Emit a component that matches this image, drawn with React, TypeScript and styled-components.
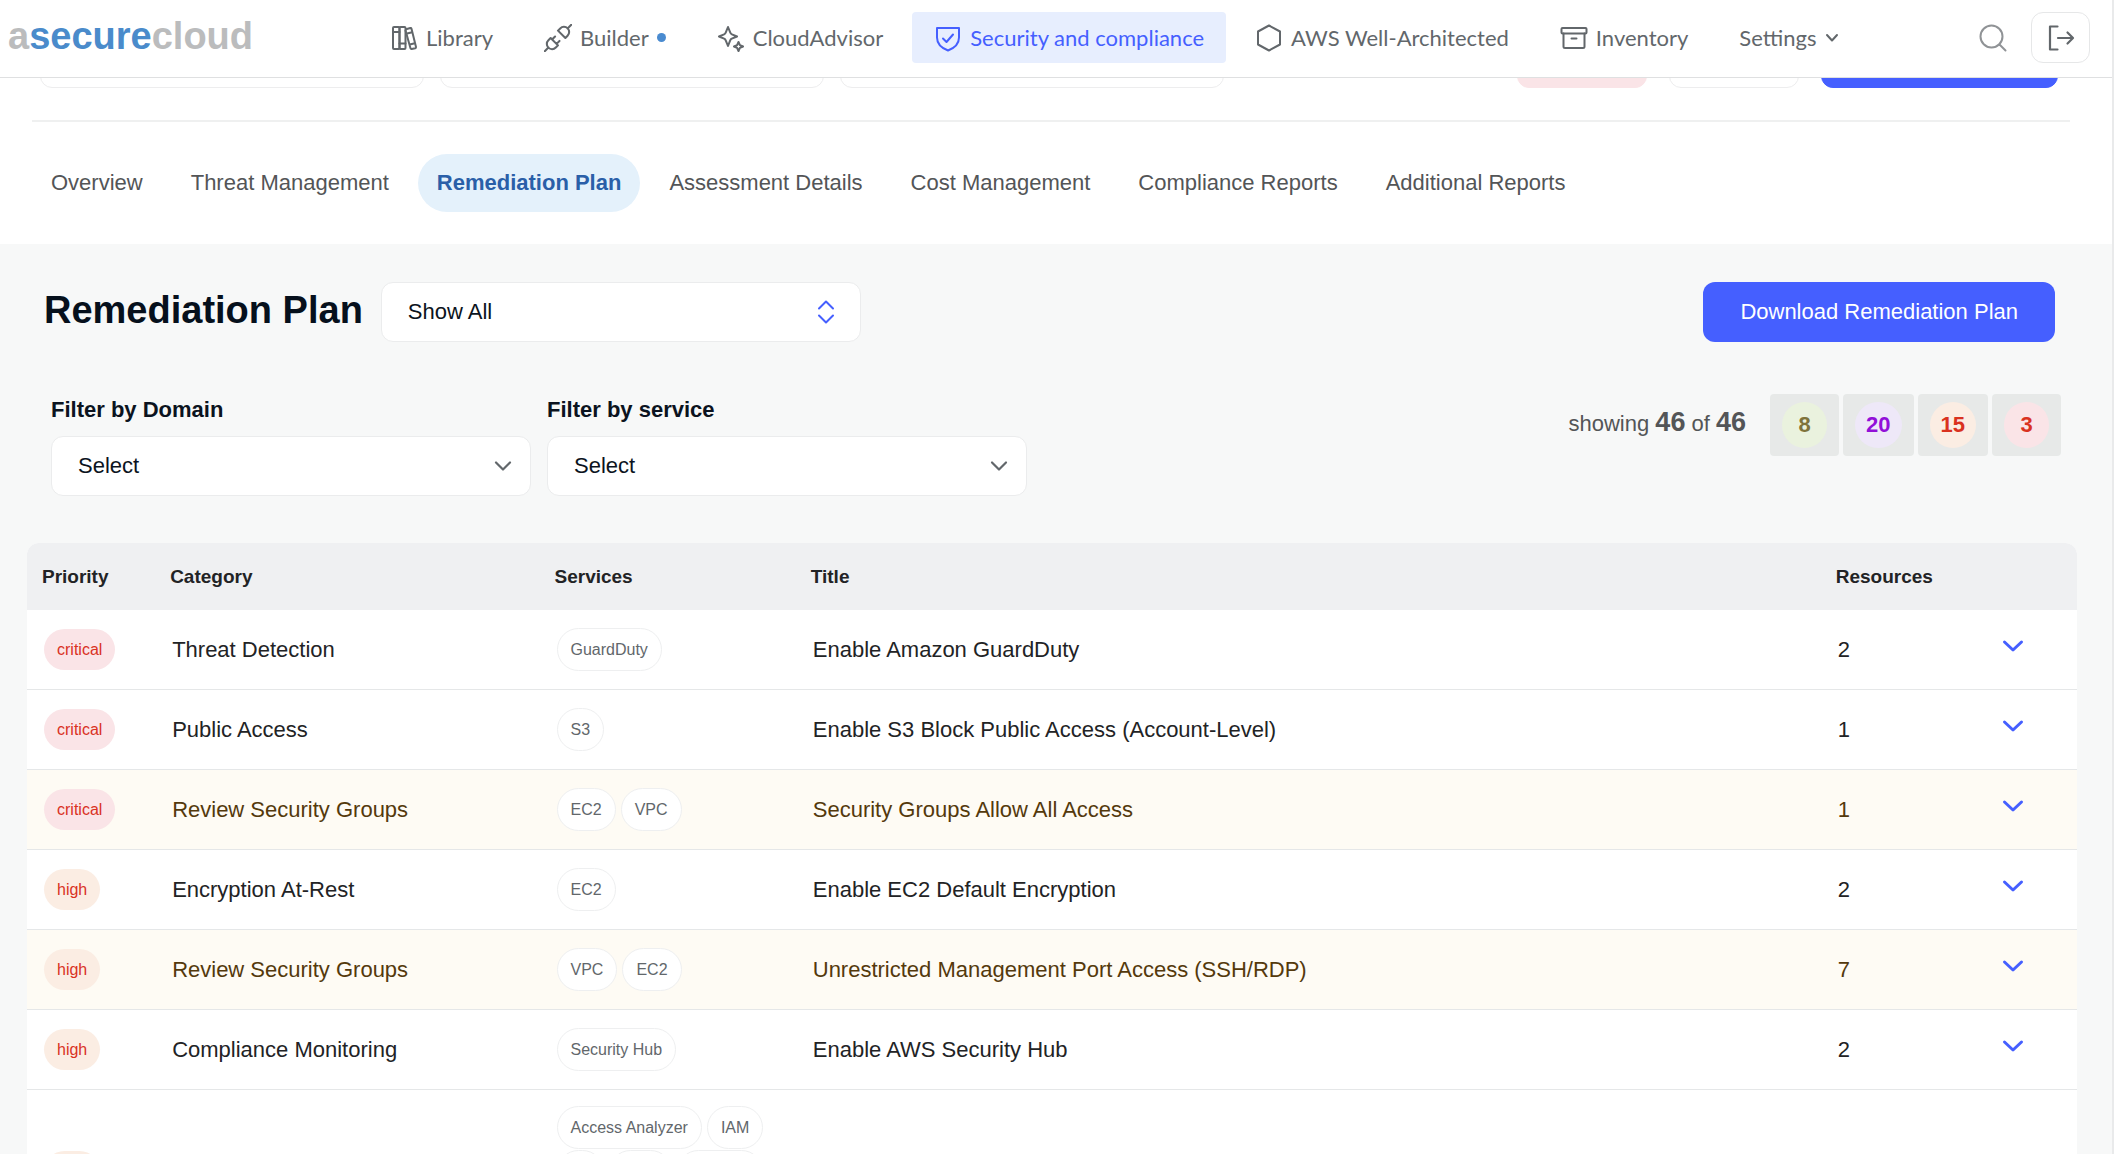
import React from 'react';
import styled, { createGlobalStyle, css } from 'styled-components';

const sans = `"Liberation Sans", Arial, Helvetica, sans-serif`;
const lato = `Lato, "Open Sans", sans-serif`;
const line = '#e5e7e8';
const blue = '#455fff';

const Global = createGlobalStyle`
  *, *::before, *::after { box-sizing: border-box; }
  html { height: 100%; overflow: hidden; }
  body { margin: 0; height: 100%; overflow: hidden; background: #f7f8f8; font-family: ${sans}; font-size: 22px; line-height: 28px; color: #222325; }
  #root { height: 100%; }
  button, select { font: inherit; color: inherit; margin: 0; }
  button { background: none; border: 0; padding: 0; cursor: pointer; }
  a { color: inherit; text-decoration: none; }
`;

const Page = styled.div`
  height: 100%;
  overflow: hidden;
  border-right: 2px solid #e9eaeb;
`;

const Header = styled.header`
  position: relative;
  z-index: 1;
  display: flex;
  align-items: flex-start;
  height: 78px;
  padding: 12px 22px 0 8px;
  background: #fff;
  border-bottom: 1px solid #dfe0e1;
`;

const Logo = styled.a`
  flex: 0 0 360px;
  font-size: 38px;
  line-height: 48px;
  font-weight: 700;
  color: #bbbcbd;
  b { color: #4a8bcb; }
`;

const Nav = styled.nav`
  display: flex;
  gap: 7px;
  font-family: ${lato};
`;

const NavLink = styled.a<{ $active?: boolean }>`
  display: flex;
  align-items: center;
  gap: 8px;
  height: 51px;
  padding: 0 22px;
  border-radius: 4px;
  white-space: nowrap;
  color: ${p => (p.$active ? blue : '#62676b')};
  background: ${p => (p.$active ? '#e7eefe' : 'transparent')};
  svg { flex: none; }
`;

const Dot = styled.span`
  width: 9px;
  height: 9px;
  border-radius: 50%;
  background: #4a8bd0;
`;

const Tools = styled.div`
  display: flex;
  align-items: center;
  gap: 24px;
  margin-left: auto;
  color: #909396;
`;

const ToolButton = styled.button<{ $boxed?: boolean }>`
  display: flex;
  align-items: center;
  justify-content: center;
  height: 51px;
  ${p => p.$boxed && css`
    width: 59px;
    border: 1px solid #e6e7e8;
    border-radius: 12px;
    color: #62676b;
  `}
`;

const Top = styled.section`
  padding: 0 42px 0 32px;
  height: 166px;
  background: #fff;
`;

const Strip = styled.div`
  display: flex;
  align-items: flex-end;
  height: 44px;
  padding: 0 12px 32px 8px;
  border-bottom: 2px solid #eff0f0;
`;

const CutBox = styled.div<{ $w: number; $gap: number; $bg?: string }>`
  width: ${p => p.$w}px;
  height: 60px;
  margin-right: ${p => p.$gap}px;
  border-radius: 12px;
  border: 1px solid ${p => p.$bg ?? '#ededee'};
  background: ${p => p.$bg ?? '#fff'};
`;

const Push = styled.div`
  flex: 1;
`;

const Tabs = styled.nav`
  display: flex;
  gap: 10px;
  padding-top: 32px;
`;

const Tab = styled.a<{ $active?: boolean }>`
  padding: 0 19px;
  border-radius: 29px;
  line-height: 58px;
  white-space: nowrap;
  color: ${p => (p.$active ? '#2a5fa8' : '#535557')};
  font-weight: ${p => (p.$active ? 700 : 400)};
  background: ${p => (p.$active ? '#e4f1fb' : 'transparent')};
`;

const Body = styled.main`
  padding: 38px 35px 0 27px;
`;

const TitleBar = styled.div`
  display: flex;
  align-items: center;
  padding: 0 22px 0 17px;
  gap: 18px;
`;

const Title = styled.h1`
  margin: 0;
  padding-bottom: 4px;
  font-size: 38px;
  line-height: 56px;
  color: #06101c;
  white-space: nowrap;
`;

const Picker = styled.div`
  display: grid;
  width: 480px;
  align-items: center;
  > * { grid-area: 1 / 1; }
  > svg { justify-self: end; pointer-events: none; }
`;

const Select = styled.select`
  appearance: none;
  width: 100%;
  height: 60px;
  padding: 0 26px;
  border: 1px solid #ebeced;
  border-radius: 12px;
  background: #fff;
  color: #0b1320;
`;

const Download = styled.button`
  margin-left: auto;
  height: 60px;
  padding: 0 37px;
  border-radius: 12px;
  background: ${blue};
  color: #fff;
  white-space: nowrap;
`;

const FilterBar = styled.div`
  display: flex;
  gap: 16px;
  padding: 52px 16px 0 24px;
`;

const Filter = styled.div`
  display: flex;
  flex-direction: column;
  gap: 12px;
  padding-top: 2px;
  label { font-weight: 700; color: #0b1320; }
`;

const Counts = styled.div`
  display: flex;
  align-items: flex-start;
  gap: 4px;
  margin-left: auto;
`;

const Showing = styled.p`
  margin: 0 20px 0 0;
  line-height: 56px;
  color: #535557;
  b { font-size: 27px; }
`;

const tones = {
  low: css`background: #eaf2de; color: #7f733b;`,
  medium: css`background: #eee8f8; color: #9210d8;`,
  high: css`background: #fbede3; color: #d9321f;`,
  critical: css`background: #fae4e7; color: #d9321f;`,
};
type Tone = keyof typeof tones;

const CountButton = styled.button`
  height: 62px;
  padding: 0 12px;
  border-radius: 4px;
  background: #e7e9e8;
`;

const CountPill = styled.span<{ $tone: Tone }>`
  display: block;
  min-width: 45px;
  padding: 0 11px;
  border-radius: 23px;
  line-height: 46px;
  font-weight: 700;
  ${p => tones[p.$tone]}
`;

const Table = styled.table`
  width: 100%;
  margin-top: 47px;
  border-collapse: separate;
  border-spacing: 0;
  table-layout: fixed;
  background: #fff;
  border-radius: 12px 12px 0 0;
  overflow: hidden;
`;

const Th = styled.th`
  height: 67px;
  padding: 0 15px;
  background: #eff0f2;
  text-align: left;
  font-size: 19px;
`;

const Row = styled.tr<{ $review?: boolean }>`
  background: ${p => (p.$review ? '#fefbf4' : '#fff')};
  color: ${p => (p.$review ? '#54390c' : '#222325')};
`;

const Td = styled.td`
  height: 80px;
  padding: 16px 17px;
  border-bottom: 1px solid ${line};
`;

const Priority = styled.span<{ $tone: Tone }>`
  display: inline-block;
  padding: 0 13px;
  border-radius: 21px;
  font-size: 16px;
  line-height: 41px;
  vertical-align: top;
  ${p => tones[p.$tone]}
`;

const Services = styled.div`
  display: flex;
  flex-wrap: wrap;
  gap: 1px 5px;
`;

const Service = styled.span`
  padding: 0 13px;
  border: 1px solid #eeeff0;
  border-radius: 22px;
  background: #fff;
  font-size: 16px;
  line-height: 41px;
  color: #62676b;
  white-space: nowrap;
`;

const Expand = styled.button`
  display: block;
  padding: 0 0 8px;
  color: ${blue};
  svg { display: block; }
`;

type IconProps = { size?: number; width?: number; box?: string; children: React.ReactNode };
const Icon = ({ size = 28, width = 2, box = '0 0 28 28', children }: IconProps) => (
  <svg width={size} height={size} viewBox={box} fill="none" stroke="currentColor"
    strokeWidth={width} strokeLinecap="round" strokeLinejoin="round" aria-hidden="true">
    {children}
  </svg>
);

const LibraryIcon = () => (
  <Icon>
    <rect x="3" y="3" width="6.500" height="22" rx="1" />
    <rect x="9.500" y="3" width="6" height="22" rx="1" />
    <path d="M3 8h6.500M9.500 19.500h6M16 5.200l4.300-1.200a1 1 0 0 1 1.200.7L26 23a1 1 0 0 1-.7 1.200l-3.600.8a1 1 0 0 1-1.200-.7L15.500 6.500M17 9.500l5.200-1.300M19.800 20.500l5-1.200" />
  </Icon>
);

const PlugIcon = () => (
  <Icon width={1.4} box="2.500 2.500 19 19">
    <path d="M7 12l5 5-1.500 1.500a3.536 3.536 0 1 1-5-5zM17 12l-5-5 1.500-1.500a3.536 3.536 0 1 1 5 5zM3 21l2.500-2.500M18.500 5.500L21 3M10 11l-2 2M13 14l-2 2" />
  </Icon>
);

const SparkIcon = () => (
  <Icon>
    <path d="M11 3l2.300 5.700a3 3 0 0 0 1.600 1.600L20 12.500l-5.200 2.200a3 3 0 0 0-1.600 1.600L11 22l-2.300-5.700a3 3 0 0 0-1.600-1.600L2 12.500l5.100-2.200a3 3 0 0 0 1.600-1.600zM21.500 18l1.400 3.100 3.100 1.400-3.100 1.400-1.400 3.100-1.400-3.100-3.100-1.400 3.100-1.400z" />
  </Icon>
);

const ShieldIcon = () => (
  <Icon>
    <path d="M3 4h22v9.500c0 6.500-4.500 10.500-11 13-6.500-2.500-11-6.500-11-13zM9 14.500l3.500 3.500 6.500-7.500" />
  </Icon>
);

const HexIcon = () => (
  <Icon>
    <path d="M14 1.500l11 6v13L14 26.500l-11-6v-13z" />
  </Icon>
);

const ArchiveIcon = () => (
  <Icon>
    <rect x="1.500" y="4" width="25" height="5.500" rx="1" />
    <path d="M3.500 9.500v13a1.500 1.500 0 0 0 1.500 1.500h18a1.500 1.500 0 0 0 1.500-1.500v-13M11.500 14.500h5" />
  </Icon>
);

const nav: { label: string; icon?: React.ReactNode; active?: boolean; dot?: boolean; menu?: boolean }[] = [
  { label: 'Library', icon: <LibraryIcon /> },
  { label: 'Builder', icon: <PlugIcon />, dot: true },
  { label: 'CloudAdvisor', icon: <SparkIcon /> },
  { label: 'Security and compliance', icon: <ShieldIcon />, active: true },
  { label: 'AWS Well-Architected', icon: <HexIcon /> },
  { label: 'Inventory', icon: <ArchiveIcon /> },
  { label: 'Settings', menu: true },
];

const tabs = ['Overview', 'Threat Management', 'Remediation Plan', 'Assessment Details', 'Cost Management', 'Compliance Reports', 'Additional Reports'];

const counts: [Tone, number][] = [['low', 8], ['medium', 20], ['high', 15], ['critical', 3]];

type Item = { tone: Tone; category: string; services: string[]; title: string; resources: number; review?: boolean };
const items: Item[] = [
  { tone: 'critical', category: 'Threat Detection', services: ['GuardDuty'], title: 'Enable Amazon GuardDuty', resources: 2 },
  { tone: 'critical', category: 'Public Access', services: ['S3'], title: 'Enable S3 Block Public Access (Account-Level)', resources: 1 },
  { tone: 'critical', category: 'Review Security Groups', services: ['EC2', 'VPC'], title: 'Security Groups Allow All Access', resources: 1, review: true },
  { tone: 'high', category: 'Encryption At-Rest', services: ['EC2'], title: 'Enable EC2 Default Encryption', resources: 2 },
  { tone: 'high', category: 'Review Security Groups', services: ['VPC', 'EC2'], title: 'Unrestricted Management Port Access (SSH/RDP)', resources: 7, review: true },
  { tone: 'high', category: 'Compliance Monitoring', services: ['Security Hub'], title: 'Enable AWS Security Hub', resources: 2 },
];

const FilterSelect = ({ id, label }: { id: string; label: string }) => (
  <Filter>
    <label htmlFor={id}>{label}</label>
    <Picker>
      <Select id={id} defaultValue="Select"><option>Select</option></Select>
      <svg width="46" height="28" viewBox="0 0 46 28" fill="none" stroke="#62676b" strokeWidth="2.200" strokeLinecap="round" strokeLinejoin="round" aria-hidden="true">
        <path d="M11 10.500l7 7 7-7" />
      </svg>
    </Picker>
  </Filter>
);

export default function App() {
  return (
    <Page>
      <Global />
      <Header>
        <Logo href="#">a<b>secure</b>cloud</Logo>
        <Nav>
          {nav.map(n => (
            <NavLink key={n.label} href="#" $active={n.active}>
              {n.icon}
              {n.label}
              {n.dot && <Dot />}
              {n.menu && (
                <svg width="16" height="16" viewBox="0 0 16 16" fill="none" stroke="currentColor" strokeWidth="2" strokeLinecap="round" strokeLinejoin="round" aria-hidden="true">
                  <path d="M3 5l5 5.500 5-5.500" />
                </svg>
              )}
            </NavLink>
          ))}
        </Nav>
        <Tools>
          <ToolButton aria-label="Search">
            <Icon width={2}>
              <circle cx="12.500" cy="12.500" r="11" />
              <path d="M20.500 20.500l6 6" />
            </Icon>
          </ToolButton>
          <ToolButton $boxed aria-label="Sign out">
            <Icon width={2.2}>
              <path d="M10.500 2.500H3v23h7.500M11 14h14.500M20.500 8.500l5.500 5.500-5.500 5.500" />
            </Icon>
          </ToolButton>
        </Tools>
      </Header>

      <Top>
        <Strip>
          <CutBox $w={384} $gap={16} />
          <CutBox $w={384} $gap={16} />
          <CutBox $w={384} $gap={0} />
          <Push />
          <CutBox $w={130} $gap={22} $bg="#fae4e7" />
          <CutBox $w={130} $gap={22} />
          <CutBox $w={237} $gap={0} $bg={blue} />
        </Strip>
        <Tabs>
          {tabs.map(t => <Tab key={t} href="#" $active={t === 'Remediation Plan'}>{t}</Tab>)}
        </Tabs>
      </Top>

      <Body>
        <TitleBar>
          <Title>Remediation Plan</Title>
          <Picker>
            <Select aria-label="Show" defaultValue="Show All"><option>Show All</option></Select>
            <svg width="48" height="28" viewBox="0 0 48 28" fill="none" stroke={blue} strokeWidth="2" strokeLinecap="round" strokeLinejoin="round" aria-hidden="true">
              <path d="M6 10.500l7-7 7 7M6 17.500l7 7 7-7" />
            </svg>
          </Picker>
          <Download>Download Remediation Plan</Download>
        </TitleBar>

        <FilterBar>
          <FilterSelect id="domain" label="Filter by Domain" />
          <FilterSelect id="service" label="Filter by service" />
          <Counts>
            <Showing>showing <b>46</b> of <b>46</b></Showing>
            {counts.map(([tone, n]) => (
              <CountButton key={tone} aria-label={`${n} ${tone}`}><CountPill $tone={tone}>{n}</CountPill></CountButton>
            ))}
          </Counts>
        </FilterBar>

        <Table>
          <colgroup>
            <col style={{ width: '6.25%' }} />
            <col style={{ width: '18.75%' }} />
            <col style={{ width: '12.5%' }} />
            <col style={{ width: '50%' }} />
            <col style={{ width: '8%' }} />
            <col />
          </colgroup>
          <thead>
            <tr><Th>Priority</Th><Th>Category</Th><Th>Services</Th><Th>Title</Th><Th>Resources</Th><Th aria-label="Details" /></tr>
          </thead>
          <tbody>
            {items.map(r => (
              <Row key={r.title} $review={r.review}>
                <Td><Priority $tone={r.tone}>{r.tone}</Priority></Td>
                <Td>{r.category}</Td>
                <Td><Services>{r.services.map(s => <Service key={s}>{s}</Service>)}</Services></Td>
                <Td>{r.title}</Td>
                <Td>{r.resources}</Td>
                <Td>
                  <Expand aria-label={`Expand ${r.title}`}>
                    <svg width="22" height="22" viewBox="0 0 22 22" fill="none" stroke="currentColor" strokeWidth="3" strokeLinecap="round" strokeLinejoin="round" aria-hidden="true">
                      <path d="M2.500 7l8.500 8 8.500-8" />
                    </svg>
                  </Expand>
                </Td>
              </Row>
            ))}
            <Row>
              <Td><Priority $tone="high">high</Priority></Td>
              <Td />
              <Td><Services>{['Access Analyzer', 'IAM', 'S3', 'KMS', 'Lambda', 'SQS'].map(s => <Service key={s}>{s}</Service>)}</Services></Td>
              <Td /><Td /><Td />
            </Row>
          </tbody>
        </Table>
      </Body>
    </Page>
  );
}
